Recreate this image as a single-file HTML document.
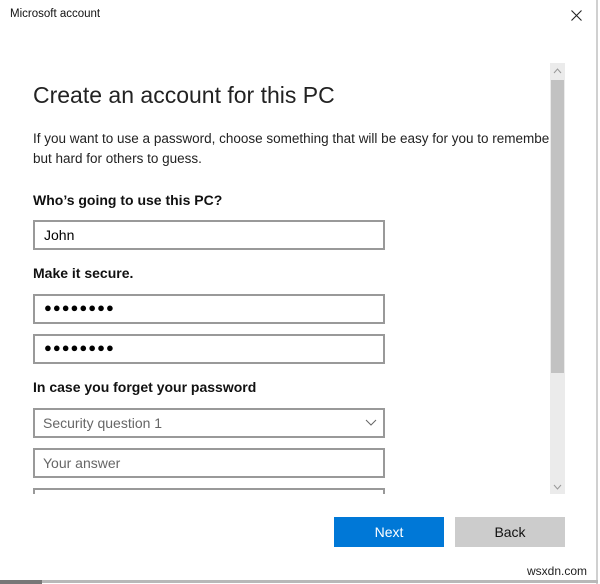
<!DOCTYPE html>
<html><head><style>
body{margin:0;width:600px;height:584px;background:#fff;position:relative;overflow:hidden;font-family:"Liberation Sans",sans-serif;color:#000}
.a{position:absolute}
.in{position:absolute;left:33px;width:348px;height:26px;border:2px solid #999;background:#fff}
.lab{position:absolute;left:33px;font-size:14px;font-weight:bold;color:#111}
.dot{position:absolute;left:9px;top:4px;font-size:13px;letter-spacing:1px}
</style></head><body>
<div class="a" style="left:10px;top:8px;font-size:11.5px;color:#111">Microsoft account</div>
<svg class="a" style="left:571px;top:10px" width="11" height="11"><path d="M0.5 0.5L10.5 10.5M10.5 0.5L0.5 10.5" stroke="#222" stroke-width="1.1"/></svg>
<div class="a" style="left:596px;top:0;width:2px;height:584px;background:#d0d0d0"></div>
<div class="a" style="left:0;top:580px;width:598px;height:3px;background:#b8b8b8"></div>
<div class="a" style="left:0;top:580px;width:42px;height:4px;background:#777"></div>
<div class="a" style="left:33px;top:82px;font-size:23px;color:#222">Create an account for this PC</div>
<div class="a" style="left:33px;top:129px;font-size:13.5px;line-height:20px;color:#222;width:516px;overflow:hidden;white-space:nowrap">If you want to use a password, choose something that will be easy for you to remember<br>but hard for others to guess.</div>
<div class="lab" style="top:192px">Who’s going to use this PC?</div>
<div class="in" style="top:220px"><span class="a" style="left:9px;top:5px;font-size:14px">John</span></div>
<div class="lab" style="top:265px">Make it secure.</div>
<div class="in" style="top:294px"><span class="dot">●●●●●●●●</span></div>
<div class="in" style="top:334px"><span class="dot">●●●●●●●●</span></div>
<div class="lab" style="top:379px">In case you forget your password</div>
<div class="in" style="top:408px"><span class="a" style="left:8px;top:5px;font-size:14px;color:#666">Security question 1</span><svg class="a" style="left:330px;top:9px" width="12" height="8"><path d="M1 1L6 6L11 1" stroke="#666" fill="none"/></svg></div>
<div class="in" style="top:448px"><span class="a" style="left:8px;top:5px;font-size:14px;color:#666">Your answer</span></div>
<div class="in" style="top:488px;height:4px;border-bottom:none"></div>
<div class="a" style="left:550px;top:63px;width:15px;height:431px;background:#ebebeb"></div>
<div class="a" style="left:551px;top:80px;width:13px;height:293px;background:#c2c2c2"></div>
<svg class="a" style="left:553px;top:68px" width="9" height="6"><path d="M1 5L4.5 1L8 5" stroke="#999" fill="none"/></svg>
<svg class="a" style="left:553px;top:484px" width="9" height="6"><path d="M1 1L4.5 5L8 1" stroke="#999" fill="none"/></svg>
<div class="a" style="left:334px;top:517px;width:110px;height:30px;background:#0078d7;color:#fff;font-size:14px;text-align:center;line-height:30px">Next</div>
<div class="a" style="left:455px;top:517px;width:110px;height:30px;background:#ccc;color:#111;font-size:14px;text-align:center;line-height:30px">Back</div>
<div class="a" style="left:527px;top:564px;font-size:12px;color:#222">wsxdn.com</div>
</body></html>
